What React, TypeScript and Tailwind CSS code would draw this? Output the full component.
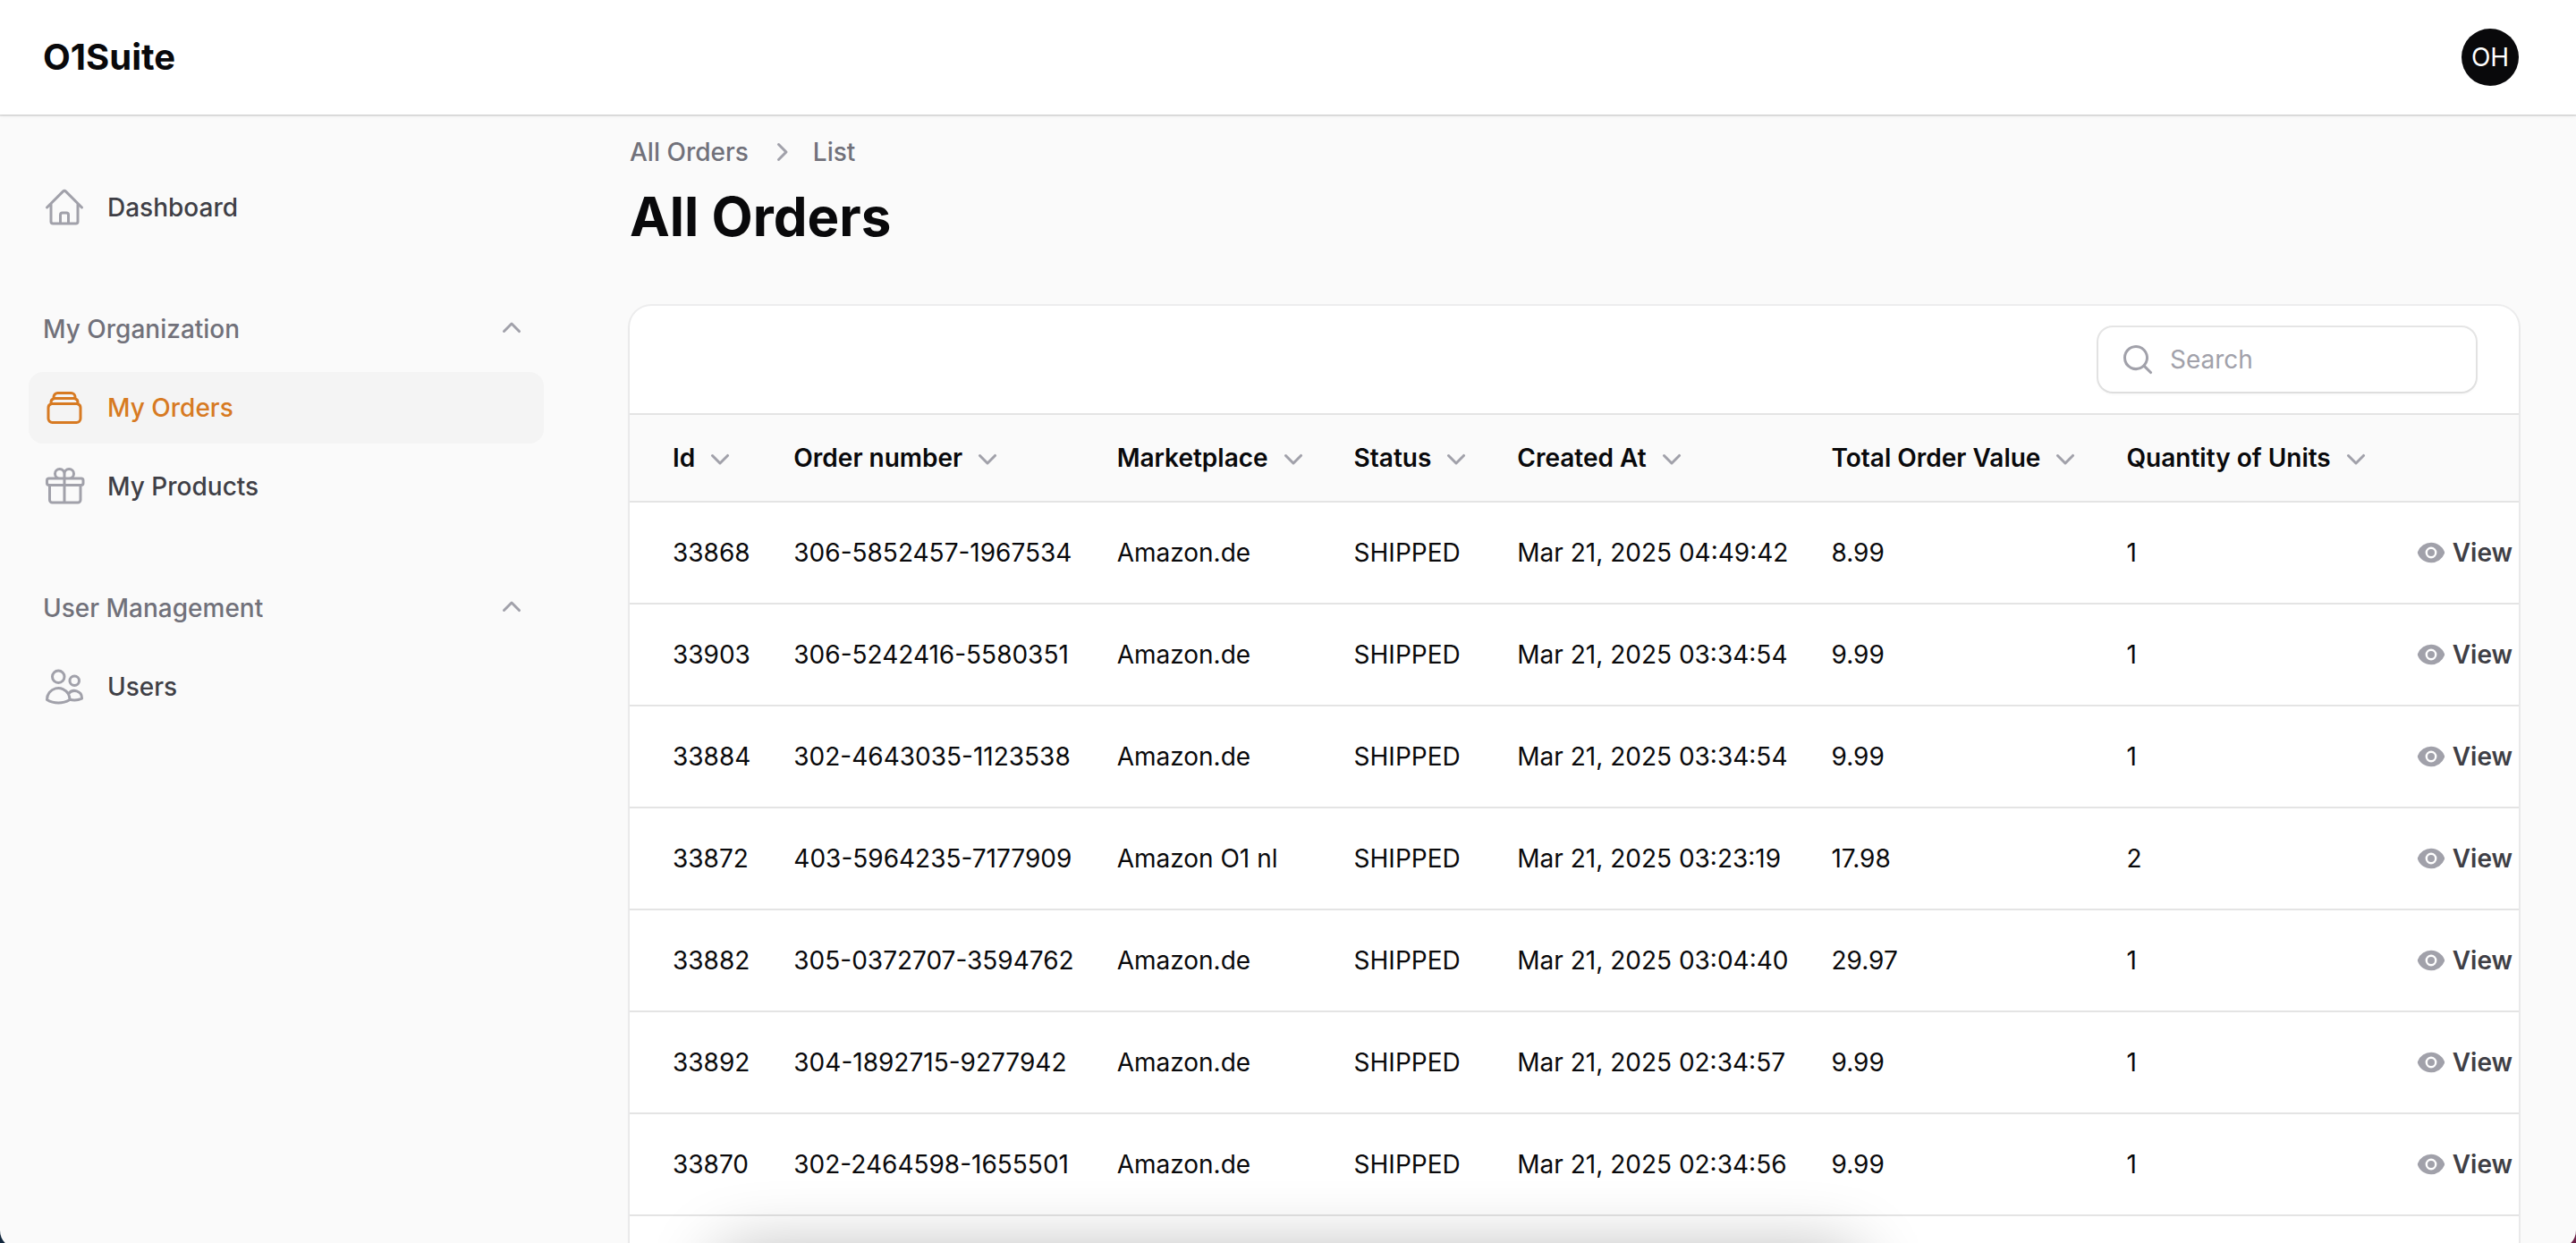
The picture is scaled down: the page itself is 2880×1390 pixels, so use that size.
import React from "react";
import {
  HiMiniChevronDown,
  HiMiniChevronRight,
  HiMiniChevronUp,
  HiMiniEye,
  HiMiniMagnifyingGlass,
  HiOutlineGift,
  HiOutlineHome,
  HiOutlineRectangleStack,
  HiOutlineUsers,
} from "react-icons/hi2";

type IconType = React.ComponentType<{ className?: string }>;

const columns = [
  "Id",
  "Order number",
  "Marketplace",
  "Status",
  "Created At",
  "Total Order Value",
  "Quantity of Units",
];

const orders = [
  ["33868", "306-5852457-1967534", "Amazon.de", "SHIPPED", "Mar 21, 2025 04:49:42", "8.99", "1"],
  ["33903", "306-5242416-5580351", "Amazon.de", "SHIPPED", "Mar 21, 2025 03:34:54", "9.99", "1"],
  ["33884", "302-4643035-1123538", "Amazon.de", "SHIPPED", "Mar 21, 2025 03:34:54", "9.99", "1"],
  ["33872", "403-5964235-7177909", "Amazon O1 nl", "SHIPPED", "Mar 21, 2025 03:23:19", "17.98", "2"],
  ["33882", "305-0372707-3594762", "Amazon.de", "SHIPPED", "Mar 21, 2025 03:04:40", "29.97", "1"],
  ["33892", "304-1892715-9277942", "Amazon.de", "SHIPPED", "Mar 21, 2025 02:34:57", "9.99", "1"],
  ["33870", "302-2464598-1655501", "Amazon.de", "SHIPPED", "Mar 21, 2025 02:34:56", "9.99", "1"],
];

function NavItem({ icon: Icon, label, active }: { icon: IconType; label: string; active?: boolean }) {
  return (
    <li>
      <a
        href="#"
        className={
          active
            ? "flex items-center gap-6 rounded-2xl bg-[#f4f4f4] p-4 text-[#d77a22]"
            : "flex items-center gap-6 rounded-2xl p-4 text-[#3f3f46]"
        }
      >
        <Icon className={active ? "size-12" : "size-12 text-[#a1a1aa]"} />
        <span className="font-medium">{label}</span>
      </a>
    </li>
  );
}

function NavGroup({ label, children }: { label: string; children: React.ReactNode }) {
  return (
    <section className="flex flex-col gap-2">
      <button type="button" className="flex h-20 items-center justify-between px-4 font-medium text-[#71717a]">
        {label}
        <HiMiniChevronUp className="size-10 text-[#a1a1aa]" />
      </button>
      <ul className="flex flex-col gap-2">{children}</ul>
    </section>
  );
}

export default function App() {
  return (
    <div className="h-screen overflow-hidden bg-linear-to-r from-[#12273d] to-[#6b2247] font-['Inter',sans-serif] text-[28px] leading-10 text-[#09090b]">
      <div className="relative flex h-[calc(100%+6px)] flex-col overflow-hidden rounded-b-[20px] bg-[#fafafa]">
        <header className="relative z-10 flex h-32 shrink-0 items-center justify-between bg-white pr-16 pl-12 shadow-[0_0_0_2px_rgba(9,9,11,0.1),0_2px_4px_rgba(0,0,0,0.05)]">
          <a href="#" className="text-[40px] font-bold">
            O1Suite
          </a>
          <button type="button" className="size-16 rounded-full bg-[#09090b] text-white">
            OH
          </button>
        </header>

        <div className="flex min-h-0 flex-1">
          <nav className="flex w-160 shrink-0 flex-col gap-14 px-8 py-16">
            <ul>
              <NavItem icon={HiOutlineHome} label="Dashboard" />
            </ul>
            <NavGroup label="My Organization">
              <NavItem icon={HiOutlineRectangleStack} label="My Orders" active />
              <NavItem icon={HiOutlineGift} label="My Products" />
            </NavGroup>
            <NavGroup label="User Management">
              <NavItem icon={HiOutlineUsers} label="Users" />
            </NavGroup>
          </nav>

          <main className="min-w-0 flex-1 overflow-hidden px-16 pt-[22px]">
            <nav aria-label="Breadcrumb" className="flex items-center gap-4 font-medium text-[#71717a]">
              <a href="#">All Orders</a>
              <HiMiniChevronRight className="size-10 text-[#a1a1aa]" />
              <a href="#">List</a>
            </nav>
            <h1 className="mt-4 text-[60px] leading-[72px] font-bold">All Orders</h1>

            <section className="mt-16 overflow-hidden rounded-3xl bg-white shadow-[0_0_0_2px_rgba(9,9,11,0.05),0_2px_4px_rgba(0,0,0,0.05)]">
              <div className="flex justify-end px-12 py-6">
                <label className="flex h-18 w-[422px] items-center gap-4 rounded-2xl bg-white pl-6 shadow-[0_0_0_2px_rgba(9,9,11,0.1),0_2px_4px_rgba(0,0,0,0.05)]">
                  <HiMiniMagnifyingGlass className="size-10 text-[#a1a1aa]" />
                  <input
                    type="search"
                    placeholder="Search"
                    aria-label="Search"
                    className="min-w-0 flex-1 outline-none placeholder:text-[#a1a1aa]"
                  />
                </label>
              </div>

              <div className="overflow-hidden border-t-2 border-[#e4e4e4]">
                <table className="w-full text-left whitespace-nowrap">
                  <thead>
                    <tr className="bg-[#fafafa]">
                      {columns.map((column) => (
                        <th key={column} className="px-6 py-7 font-semibold first:pl-12">
                          <button type="button" className="flex items-center gap-2">
                            {column}
                            <HiMiniChevronDown className="size-10 text-[#a1a1aa]" />
                          </button>
                        </th>
                      ))}
                      <th aria-label="Actions" />
                    </tr>
                  </thead>
                  <tbody>
                    {orders.map((order) => (
                      <tr key={order[0]} className="h-[114px] border-t-2 border-[#e4e4e4]">
                        {order.map((value, i) => (
                          <td key={i} className="px-6 first:pl-12">
                            {value}
                          </td>
                        ))}
                        <td className="pr-12 pl-6">
                          <a href="#" className="flex items-center justify-end gap-2 font-semibold text-[#3f3f46]">
                            <HiMiniEye className="size-8 text-[#a1a1aa]" />
                            View
                          </a>
                        </td>
                      </tr>
                    ))}
                    <tr className="h-[114px] border-t-2 border-[#e4e4e4]">
                      <td colSpan={8} />
                    </tr>
                  </tbody>
                </table>
              </div>
            </section>
          </main>
        </div>

        <div className="pointer-events-none absolute inset-x-[28%] bottom-0 h-20 translate-y-full shadow-[0_8px_80px_rgba(0,0,0,0.33)]" />
      </div>
    </div>
  );
}
